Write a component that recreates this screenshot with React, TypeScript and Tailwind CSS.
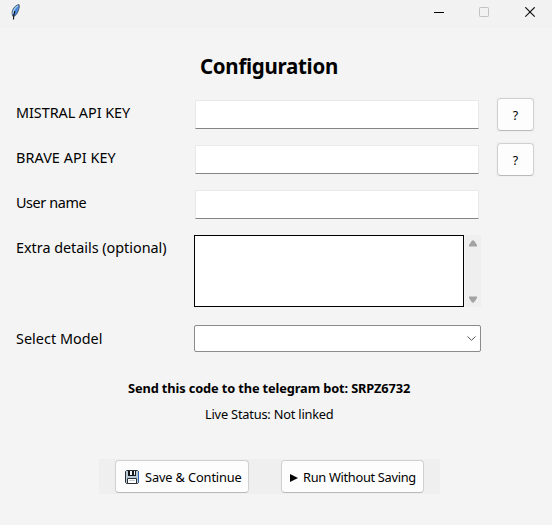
import type { ReactNode } from "react";

function Field() {
  return (
    <div className="h-[29px] w-[284px] border border-x-[#e9e9e9] border-t-[#e9e9e9] border-b-[#858585] bg-white" />
  );
}

function Label({ children, className }: { children: ReactNode; className: string }) {
  return (
    <div className={`w-[179px] shrink-0 whitespace-nowrap text-[14.4px] leading-5 ${className}`}>{children}</div>
  );
}

function HelpButton() {
  return (
    <div className="-mt-[3px] ml-[17px] h-[35px] w-[39px] bg-[#f0f0f0] p-px">
      <button className="flex h-[33px] w-[37px] items-center justify-center rounded-[4px] border border-[#d0d0d0] border-b-[#bababa] bg-[#fdfdfd] pt-[3px] text-[12.5px]">
        ?
      </button>
    </div>
  );
}

function Feather() {
  return (
    <svg width="9" height="17" viewBox="0 0 9 17">
      <path d="M8 .6C5.500 .8 2.700 3.200 1.500 6.500C.9 8.500 1 10.500 2 12.500C5 12 6.600 9 7.500 6C8.200 3.800 8.700 1.800 8 .6Z" fill="#4a8ae2" stroke="#4a515e" strokeWidth=".9" />
      <path d="M7 1.800C4 3.500 2.500 6 2 10" stroke="#a9d2f0" strokeWidth="1.300" fill="none" />
      <path d="M4 7C3 9 2.500 11 2.500 15.500" stroke="#080808" strokeWidth="1.100" fill="none" />
    </svg>
  );
}

function Floppy() {
  return (
    <svg width="14" height="14" viewBox="0 0 14 14">
      <path d="M1.500 .5H12.500L13.500 1.500V12.500L12.500 13.500H1.500L.5 12.500V1.500Z" fill="#b9cbd6" stroke="#2b3035" />
      <path d="M3 1H11V6H3Z" fill="#17191c" />
      <path d="M5 1H7V5H5ZM9 1H10V5H9Z" fill="#eef4f7" />
      <path d="M2.500 8.500H11.500V13.500H2.500Z" fill="#fff" stroke="#2b3035" />
      <path d="M4 10.500H10" stroke="#c6cdd1" />
      <path d="M13.500 2V12" stroke="#2d63b4" />
    </svg>
  );
}

export default function App() {
  return (
    <div className="flex h-[525px] w-[552px] flex-col overflow-hidden bg-[#f4f4f4] font-['Noto_Sans','Open_Sans',sans-serif] text-black">
      <header className="flex h-7 shrink-0 items-start justify-between bg-[#f2f2f2] pl-[10.5px] pr-[16px] pt-[4px]">
        <Feather />
        <div className="flex items-start pt-[3px]">
          <svg className="mr-[35px]" width="10" height="10" viewBox="0 0 10 10">
            <path d="M0 5.500H10" stroke="#000" />
          </svg>
          <svg className="mr-[36px]" width="10" height="10" viewBox="0 0 10 10">
            <rect x=".5" y=".5" width="9" height="9" rx=".7" fill="none" stroke="#c3c3c3" />
          </svg>
          <svg width="11" height="11" viewBox="0 0 11 11">
            <path d="M.3 .3L9.700 9.700M9.700 .3L.3 9.700" stroke="#111" strokeWidth="1.200" />
          </svg>
        </div>
      </header>

      <main className="flex flex-col">
        <h1 className="mt-[22px] h-8 pl-[200px] text-[20.5px] font-bold leading-8 tracking-[-0.3px]">Configuration</h1>
        <div className="mt-[18px] flex h-[45px] items-start pl-4">
          <Label className="pt-[3px] tracking-[-0.05px]">MISTRAL API KEY</Label>
          <Field />
          <HelpButton />
        </div>
        <div className="flex h-[45px] items-start pl-4">
          <Label className="pt-[3px] tracking-[0.07px]">BRAVE API KEY</Label>
          <Field />
          <HelpButton />
        </div>
        <div className="flex h-[45px] items-start pl-4">
          <Label className="pt-[3px] tracking-[-0.4px]">User name</Label>
          <Field />
        </div>
        <div className="flex h-[90px] items-start pl-4">
          <Label className="-mr-px pt-[3px] tracking-[-0.02px]">Extra details (optional)</Label>
          <div className="h-[72px] w-[270px] border border-black bg-white" />
          <div className="ml-px flex h-[72px] w-4 flex-col items-center justify-between bg-[#efefef] pb-[4px] pt-[5px]">
            <svg width="8" height="7" viewBox="0 0 8 7">
              <path d="M3 .5H5L8 5V6.500H0V5Z" fill="#a3a3a3" />
            </svg>
            <svg width="8" height="7" viewBox="0 0 8 7">
              <path d="M0 .5H8V2L5 6.500H3L0 2Z" fill="#a3a3a3" />
            </svg>
          </div>
        </div>
        <div className="flex h-[27px] items-start pl-4">
          <Label className="-mr-px pt-[4px] tracking-[0.03px]">Select Model</Label>
          <div className="flex h-[27px] w-[287px] items-center justify-end rounded-[2px] border border-[#8b8b8b] bg-white pr-1">
            <svg width="9" height="5" viewBox="0 0 9 5">
              <path d="M.5 .5L4.500 4.300L8.500 .5" fill="none" stroke="#555" />
            </svg>
          </div>
        </div>

        <p className="mt-[26px] h-5 whitespace-nowrap pl-[128px] text-[12.8px] font-bold leading-5 tracking-[-0.12px]">
          Send this code to the telegram bot: SRPZ6732
        </p>
        <p className="mt-[6px] h-5 whitespace-nowrap pl-[205px] text-[12.8px] leading-5 tracking-[-0.2px]">Live Status: Not linked</p>

        <div className="ml-[99px] mt-[35px] flex h-[35px] w-[341px] gap-8 bg-[#efefef] px-4 py-px">
          <button className="flex h-[33px] w-[134px] items-center whitespace-nowrap rounded-[4px] border border-[#d0d0d0] border-b-[#bababa] bg-[#fdfdfd] pl-[9px] text-[12.8px] tracking-[-0.13px]">
            <Floppy />
            <span className="ml-[6px] pt-[2px]">Save &amp; Continue</span>
          </button>
          <button className="flex h-[33px] w-[143px] items-center whitespace-nowrap rounded-[4px] border border-[#d0d0d0] border-b-[#bababa] bg-[#fdfdfd] pl-[8px] text-[12.8px] tracking-[-0.3px]">
            <svg className="mt-[2px]" width="8" height="8" viewBox="0 0 8 8">
              <path d="M0 0L8 4L0 8Z" fill="#000" />
            </svg>
            <span className="ml-[5px] pt-[2px]">Run Without Saving</span>
          </button>
        </div>
      </main>
    </div>
  );
}
